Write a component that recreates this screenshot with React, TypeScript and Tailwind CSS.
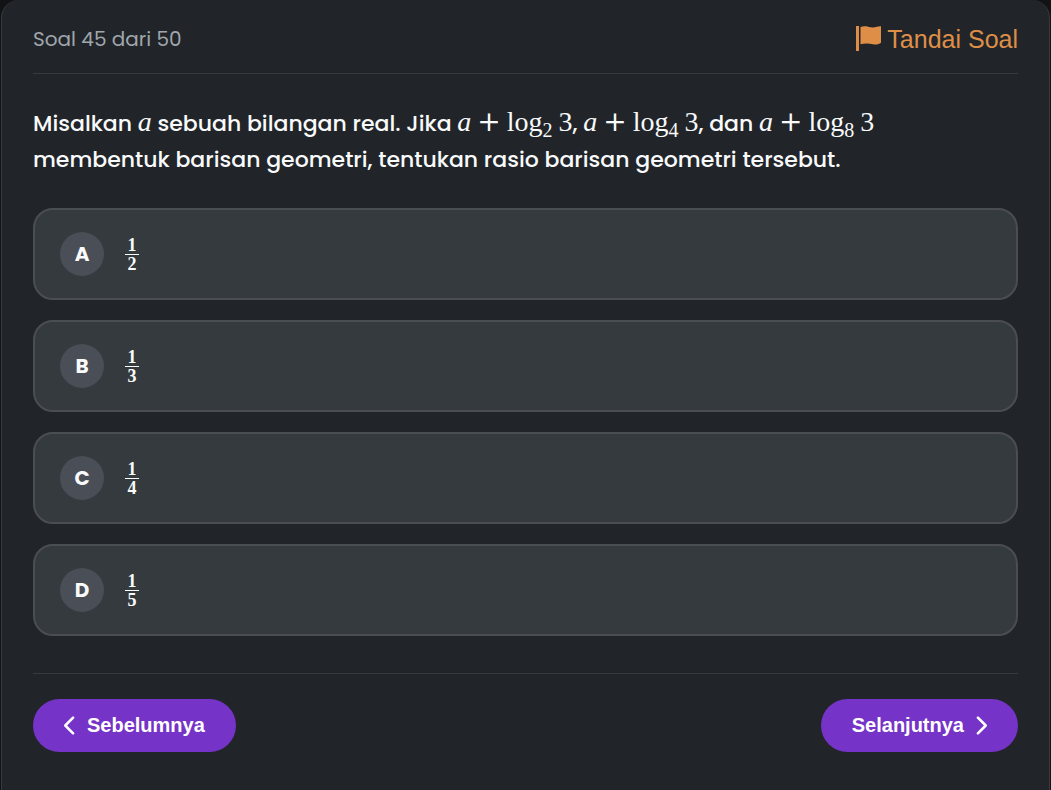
import { useState } from "react";
import type { ReactNode } from "react";
import { FaChevronLeft, FaChevronRight } from "react-icons/fa6";

const options = [
  { letter: "A", denominator: 2 },
  { letter: "B", denominator: 3 },
  { letter: "C", denominator: 4 },
  { letter: "D", denominator: 5 },
];

function FlagIcon() {
  return (
    <svg viewBox="0 0 25 26" className="h-[26px] w-[25px]" fill="currentColor" aria-hidden="true">
      <path d="M0 0h3v25H0z" />
      <path d="M4.500 .9C7 .1 9.500 0 12 .7c3 .9 6 1 9 .1 1.500-.5 2.600-.8 4-.5v16.400c-1.700 1.400-4.800 2.300-8 1.600-3.500-.8-7.500-1.500-12.500-.1z" />
    </svg>
  );
}

function Variable({ children }: { children: ReactNode }) {
  return (
    <i className="font-['Liberation_Serif',serif] text-[28px] leading-none font-normal">{children}</i>
  );
}

function LogTerm({ base }: { base: number }) {
  return (
    <span className="inline-flex items-baseline font-['Liberation_Serif',serif] text-[28px] leading-none font-normal whitespace-nowrap">
      <i>a</i>
      <span className="px-[6px] font-['DejaVu_Serif',serif] text-[28px] leading-none">+</span>
      <span>log</span>
      <sub className="top-[6px] text-[20px] leading-none">{base}</sub>
      <span className="pl-[6px]">3</span>
    </span>
  );
}

function Fraction({ denominator }: { denominator: number }) {
  return (
    <span className="flex w-[14px] flex-col text-center font-['Liberation_Serif',serif] text-[18px] leading-[16px] font-bold text-gray-50">
      <span className="border-b border-gray-50 pb-px">1</span>
      <span className="pt-px">{denominator}</span>
    </span>
  );
}

export default function App() {
  const [answer, setAnswer] = useState("");
  const [flagged, setFlagged] = useState(false);

  return (
    <div className="min-h-screen bg-[#111315] px-px font-[Poppins,Inter,sans-serif]">
      <main className="min-h-screen rounded-t-[18px] border-x border-[#373b3e] bg-[#212529] px-[31px] pt-6 pb-9">
        <header className="flex items-center justify-between border-b border-[#373b3e] pb-[19px]">
          <span className="text-[20px] leading-[30px] text-[#a0a6ac]">Soal 45 dari 50</span>
          <button
            type="button"
            aria-pressed={flagged}
            onClick={() => setFlagged(!flagged)}
            className="flex items-center gap-[6px] font-['Liberation_Sans',sans-serif] text-[25px] leading-[30px] text-[#df8e48]"
          >
            <FlagIcon />
            Tandai Soal
          </button>
        </header>

        <fieldset>
          <legend className="pt-8 pr-8 pb-[30px] text-[22px] leading-9 font-medium text-gray-50">
            Misalkan <Variable>a</Variable> sebuah bilangan real. Jika <LogTerm base={2} />,{" "}
            <LogTerm base={4} />, dan <LogTerm base={8} /> membentuk barisan geometri, tentukan
            rasio barisan geometri tersebut.
          </legend>
          <div className="flex flex-col gap-5">
            {options.map(({ letter, denominator }) => (
              <label
                key={letter}
                className="relative flex h-[92px] cursor-pointer items-center gap-[21px] rounded-[20px] border-2 border-[#4a4e53] bg-[#353a3e] px-[25px] has-checked:border-[#7533c7]"
              >
                <input
                  type="radio"
                  name="answer"
                  value={letter}
                  checked={answer === letter}
                  onChange={() => setAnswer(letter)}
                  className="sr-only"
                />
                <span className="flex size-11 items-center justify-center rounded-full bg-[#4a4e56] text-[20px] leading-none font-bold text-gray-50">
                  {letter}
                </span>
                <Fraction denominator={denominator} />
              </label>
            ))}
          </div>
        </fieldset>

        <nav className="mt-[37px] flex items-center justify-between border-t border-[#373b3e] pt-[25px] font-['Liberation_Sans',sans-serif] text-[20px] leading-[29px] font-bold text-white">
          <button type="button" className="flex items-center gap-[10px] rounded-full bg-[#7533c7] px-[31px] py-3">
            <FaChevronLeft size={21} className="w-[13px]" aria-hidden="true" />
            Sebelumnya
          </button>
          <button type="button" className="flex items-center gap-[10px] rounded-full bg-[#7533c7] px-[31px] py-3">
            Selanjutnya
            <FaChevronRight size={21} className="w-[13px]" aria-hidden="true" />
          </button>
        </nav>
      </main>
    </div>
  );
}
